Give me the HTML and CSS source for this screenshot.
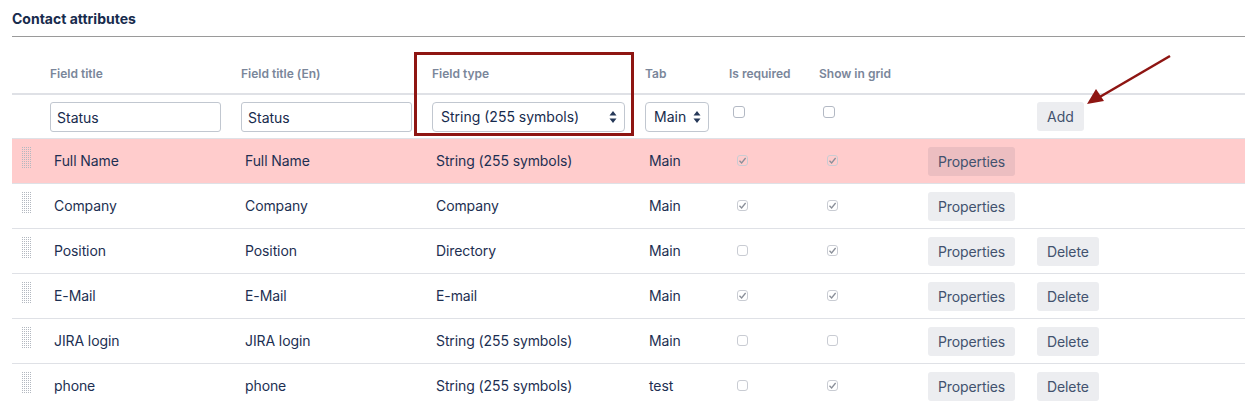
FILE: index.html
```html
<!DOCTYPE html>
<html>
<head>
  <title>Contact attributes</title>
  <link rel="stylesheet" href="styles.css">
</head>
<body>
  <svg width="0" height="0" style="position:absolute">
    <defs>
      <pattern id="dots" width="2" height="2" patternUnits="userSpaceOnUse">
        <rect width="1" height="1" fill="#b3b8c0"/>
      </pattern>
    </defs>
  </svg>
  <div class="page">
    <div class="section-title">Contact attributes</div>

    <div class="attrs">
      <div class="row head">
        <div class="cell"></div>
        <div class="cell">Field title</div>
        <div class="cell">Field title (En)</div>
        <div class="cell">Field type</div>
        <div class="cell">Tab</div>
        <div class="cell">Is required</div>
        <div class="cell">Show in grid</div>
        <div class="cell"></div>
        <div class="cell"></div>
      </div>

      <div class="row new">
        <div class="cell"></div>
        <div class="cell"><input class="field" type="text" value="Status"></div>
        <div class="cell"><input class="field" type="text" value="Status"></div>
        <div class="cell">
          <span class="select wide">String (255 symbols)<svg class="caret" width="8" height="14" viewBox="0 0 8 14"><path d="M4 1 L7.5 5.5 H0.5 Z M4 13 L7.5 8.5 H0.5 Z" fill="#253858"/></svg></span>
        </div>
        <div class="cell">
          <span class="select short">Main<svg class="caret" width="8" height="14" viewBox="0 0 8 14"><path d="M4 1 L7.5 5.5 H0.5 Z M4 13 L7.5 8.5 H0.5 Z" fill="#253858"/></svg></span>
        </div>
        <div class="cell top"><span class="check"></span></div>
        <div class="cell top"><span class="check"></span></div>
        <div class="cell"></div>
        <div class="cell btn-cell"><span class="btn">Add</span></div>
      </div>

      <div class="row item active">
        <div class="cell"><svg class="handle" width="9" height="22"><rect width="9" height="22" fill="url(#dots)"/></svg></div>
        <div class="cell text">Full Name</div>
        <div class="cell text">Full Name</div>
        <div class="cell text">String (255 symbols)</div>
        <div class="cell text">Main</div>
        <div class="cell text"><span class="check on"><svg width="9" height="9" viewBox="0 0 9 9"><path d="M1.5 4.8 L3.6 7 L7.6 2" stroke="#8a8f99" stroke-width="1.3" fill="none"/></svg></span></div>
        <div class="cell text"><span class="check on"><svg width="9" height="9" viewBox="0 0 9 9"><path d="M1.5 4.8 L3.6 7 L7.6 2" stroke="#8a8f99" stroke-width="1.3" fill="none"/></svg></span></div>
        <div class="cell btn-cell"><span class="btn">Properties</span></div>
        <div class="cell"></div>
      </div>

      <div class="row item">
        <div class="cell"><svg class="handle" width="9" height="22"><rect width="9" height="22" fill="url(#dots)"/></svg></div>
        <div class="cell text">Company</div>
        <div class="cell text">Company</div>
        <div class="cell text">Company</div>
        <div class="cell text">Main</div>
        <div class="cell text"><span class="check on"><svg width="9" height="9" viewBox="0 0 9 9"><path d="M1.5 4.8 L3.6 7 L7.6 2" stroke="#8a8f99" stroke-width="1.3" fill="none"/></svg></span></div>
        <div class="cell text"><span class="check on"><svg width="9" height="9" viewBox="0 0 9 9"><path d="M1.5 4.8 L3.6 7 L7.6 2" stroke="#8a8f99" stroke-width="1.3" fill="none"/></svg></span></div>
        <div class="cell btn-cell"><span class="btn">Properties</span></div>
        <div class="cell"></div>
      </div>

      <div class="row item">
        <div class="cell"><svg class="handle" width="9" height="22"><rect width="9" height="22" fill="url(#dots)"/></svg></div>
        <div class="cell text">Position</div>
        <div class="cell text">Position</div>
        <div class="cell text">Directory</div>
        <div class="cell text">Main</div>
        <div class="cell text"><span class="check"></span></div>
        <div class="cell text"><span class="check on"><svg width="9" height="9" viewBox="0 0 9 9"><path d="M1.5 4.8 L3.6 7 L7.6 2" stroke="#8a8f99" stroke-width="1.3" fill="none"/></svg></span></div>
        <div class="cell btn-cell"><span class="btn">Properties</span></div>
        <div class="cell btn-cell"><span class="btn">Delete</span></div>
      </div>

      <div class="row item">
        <div class="cell"><svg class="handle" width="9" height="22"><rect width="9" height="22" fill="url(#dots)"/></svg></div>
        <div class="cell text">E-Mail</div>
        <div class="cell text">E-Mail</div>
        <div class="cell text">E-mail</div>
        <div class="cell text">Main</div>
        <div class="cell text"><span class="check on"><svg width="9" height="9" viewBox="0 0 9 9"><path d="M1.5 4.8 L3.6 7 L7.6 2" stroke="#8a8f99" stroke-width="1.3" fill="none"/></svg></span></div>
        <div class="cell text"><span class="check on"><svg width="9" height="9" viewBox="0 0 9 9"><path d="M1.5 4.8 L3.6 7 L7.6 2" stroke="#8a8f99" stroke-width="1.3" fill="none"/></svg></span></div>
        <div class="cell btn-cell"><span class="btn">Properties</span></div>
        <div class="cell btn-cell"><span class="btn">Delete</span></div>
      </div>

      <div class="row item">
        <div class="cell"><svg class="handle" width="9" height="22"><rect width="9" height="22" fill="url(#dots)"/></svg></div>
        <div class="cell text">JIRA login</div>
        <div class="cell text">JIRA login</div>
        <div class="cell text">String (255 symbols)</div>
        <div class="cell text">Main</div>
        <div class="cell text"><span class="check"></span></div>
        <div class="cell text"><span class="check"></span></div>
        <div class="cell btn-cell"><span class="btn">Properties</span></div>
        <div class="cell btn-cell"><span class="btn">Delete</span></div>
      </div>

      <div class="row item">
        <div class="cell"><svg class="handle" width="9" height="22"><rect width="9" height="22" fill="url(#dots)"/></svg></div>
        <div class="cell text">phone</div>
        <div class="cell text">phone</div>
        <div class="cell text">String (255 symbols)</div>
        <div class="cell text">test</div>
        <div class="cell text"><span class="check"></span></div>
        <div class="cell text"><span class="check on"><svg width="9" height="9" viewBox="0 0 9 9"><path d="M1.5 4.8 L3.6 7 L7.6 2" stroke="#8a8f99" stroke-width="1.3" fill="none"/></svg></span></div>
        <div class="cell btn-cell"><span class="btn">Properties</span></div>
        <div class="cell btn-cell"><span class="btn">Delete</span></div>
      </div>

      <!-- annotations -->
      <div class="mark-box"></div>
      <svg class="mark-arrow" width="100" height="60" viewBox="0 0 100 60">
        <line x1="90" y1="2" x2="18" y2="44" stroke="#8e1512" stroke-width="2.6"/>
        <path d="M7 50 L16 35 L24 47 Z" fill="#8e1512"/>
      </svg>
    </div>
  </div>
</body>
</html>
```

FILE: styles.css
```css
/* Contact attributes settings */
body {
  margin: 0;
  font-family: Inter, "Noto Sans", sans-serif;
  font-size: 14px;
  color: #172b4d;
  background: #fff;
}
.page {
  padding: 0 0 0 12px;
}
.section-title {
  font-size: 14px;
  font-weight: 700;
  line-height: 18px;
  padding: 10px 0 8px;
  border-bottom: 1px solid #9a9a9a;
}
.attrs {
  position: relative;
  margin-top: 17px;
}
.row {
  display: grid;
  grid-template-columns: 30px 191px 191px 213px 84px 90px 109px 109px 1fr;
  align-items: center;
}
.cell {
  padding: 0 8px;
  white-space: nowrap;
}
.head {
  height: 39px;
  border-bottom: 2px solid #dfe1e6;
  font-size: 12px;
  font-weight: 600;
  color: #7a869a;
}
.new {
  height: 43px;
  border-bottom: 1px solid #dfe1e6;
}
.new .cell.top {
  align-self: start;
  padding-top: 11px;
}
.new .check {
  margin-left: 4px;
}
.item {
  box-sizing: border-box;
  height: 45px;
  padding-bottom: 2px;
  border-bottom: 1px solid #dfe1e6;
  letter-spacing: -0.1px;
  color: #1d2f52;
}
.item.active {
  background: #ffcccc;
}
.item .text {
  padding-left: 12px;
}
.item .check {
  margin-left: 4px;
}
.item .btn-cell {
  margin-top: 2px;
}
.field {
  box-sizing: border-box;
  width: 171px;
  height: 30px;
  margin-top: 1px;
  padding: 0 6px;
  border: 1px solid #c1c7d0;
  border-radius: 3px;
  font-family: inherit;
  font-size: 14px;
  color: #172b4d;
  background: #fff;
}
.select {
  position: relative;
  box-sizing: border-box;
  display: block;
  height: 30px;
  line-height: 28px;
  margin-top: 1px;
  padding: 0 8px;
  border: 1px solid #c1c7d0;
  border-radius: 4px;
  background: #fff;
}
.select.wide {
  width: 193px;
}
.select.short {
  width: 64px;
}
.caret {
  position: absolute;
  right: 7px;
  top: 7px;
}
.check {
  box-sizing: border-box;
  display: block;
  width: 12px;
  height: 12px;
  border: 1px solid #b3b9c4;
  border-radius: 3px;
  background: #fff;
  position: relative;
}
.item .check {
  width: 11px;
  height: 11px;
  border-color: #c9ccd3;
  background: transparent;
}
.check svg {
  position: absolute;
  left: 0;
  top: 0;
}
.btn {
  display: inline-block;
  height: 29px;
  line-height: 29px;
  padding: 0 10px;
  border-radius: 3px;
  background: rgba(9, 30, 66, 0.08);
  color: #42526e;
  font-size: 14px;
}
.handle {
  display: block;
  margin: -4px 0 0 2px;
}
.mark-box {
  position: absolute;
  left: 402px;
  top: -2px;
  width: 214px;
  height: 78px;
  border: 3px solid #8e1512;
  pointer-events: none;
}
.mark-arrow {
  position: absolute;
  left: 1068px;
  top: 0;
}
```
